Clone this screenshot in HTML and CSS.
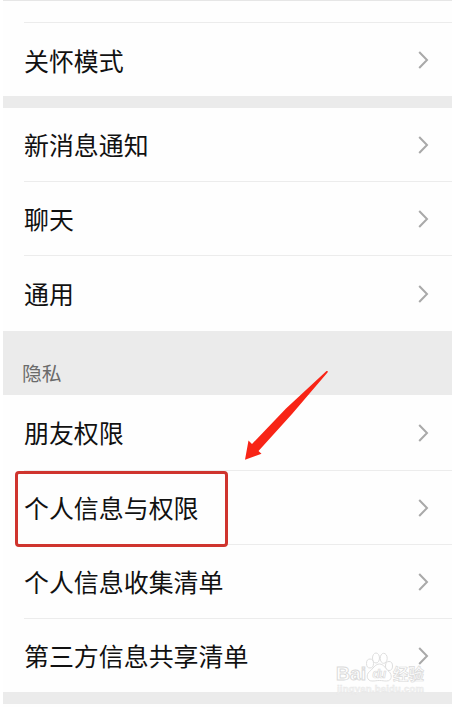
FILE: index.html
```html
<!doctype html>
<html lang="zh-CN">
<head>
    <meta charset="UTF-8">
    <title>设置</title>
    <link rel="stylesheet" href="styles.css">
</head>
<body>
    <svg class="defs" width="0" height="0">
        <symbol id="more" viewBox="0 0 12 20">
            <path d="M1.2 2 L9 10 L1.2 18"/>
        </symbol>
    </svg>
    <div class="page">
        <ul class="list first">
            <li class="empty"></li>
            <li><span>关怀模式</span><svg class="more"><use href="#more"/></svg></li>
        </ul>
        <div class="gap"></div>
        <ul class="list">
            <li><span>新消息通知</span><svg class="more"><use href="#more"/></svg></li>
            <li><span>聊天</span><svg class="more"><use href="#more"/></svg></li>
            <li class="tall"><span>通用</span><svg class="more"><use href="#more"/></svg></li>
        </ul>
        <h2 class="title">隐私</h2>
        <ul class="list privacy">
            <li class="tall"><span>朋友权限</span><svg class="more"><use href="#more"/></svg></li>
            <li><span>个人信息与权限</span><svg class="more"><use href="#more"/></svg></li>
            <li><span>个人信息收集清单</span><svg class="more"><use href="#more"/></svg></li>
            <li><span>第三方信息共享清单</span><svg class="more"><use href="#more"/></svg></li>
        </ul>
        <div class="gap"></div>
        <div class="mark"></div>
        <svg class="arrow" width="90" height="96" viewBox="0 0 90 96">
            <path d="M85.5 5 Q87.5 4.5 86.5 6.5 L51 48 L17.5 85 L20.5 87.7 L4 93.7 L7.5 74.5 L11 78 L45 42.5 Z"/>
        </svg>
        <svg class="watermark" width="100" height="50" viewBox="0 0 100 50">
            <text class="brand" x="0" y="33.5" textLength="30" lengthAdjust="spacingAndGlyphs">Bai</text>
            <g class="paw">
                <ellipse cx="34" cy="17.5" rx="3.5" ry="4.5"/>
                <ellipse cx="40" cy="12" rx="3.5" ry="5"/>
                <ellipse cx="47.7" cy="12.3" rx="3.5" ry="5"/>
                <ellipse cx="53" cy="20" rx="3.5" ry="4.5"/>
                <path d="M43.5 18 C39 18 37 23 33.5 25.5 C29.5 29 31 35 36 35 C40 35 40 34.5 43.5 34.5 C47 34.5 47 35 50.5 35 C56 35 56.5 29 53 25.5 C49.5 23 48 18 43.5 18 Z"/>
            </g>
            <text class="du" x="36.5" y="32.3" textLength="13.5">du</text>
            <text class="cn" x="57" y="33.7" textLength="31">经验</text>
            <text class="url" x="1" y="45.5" textLength="87">jingyan.baidu.com</text>
        </svg>
    </div>
</body>
</html>
```
FILE: styles.css
```css
*{
    margin: 0;
    padding: 0;
    box-sizing: border-box;
}
body{
    background: #fff;
    font-family: "Noto Sans CJK SC", sans-serif;
    color: #111;
}
li{
    list-style: none;
}
.defs{
    position: absolute;
}
.page{
    position: relative;
    width: 449px;
    height: 707px;
    margin-left: 3px;
    background: #fefefe;
    overflow: hidden;
}
.list li{
    display: flex;
    align-items: center;
    justify-content: space-between;
    height: 74px;
    margin-left: 21px;
    padding-right: 22px;
    border-bottom: 1px solid #ececec;
    font-size: 24.95px;
    line-height: 36px;
}
.list li:last-child{
    border-bottom: 0;
}
.list li.tall{
    height: 75px;
}
.list li.empty{
    height: 22px;
}
.list span{
    padding-bottom: 1px;
}
.first{
    height: 96px;
    border-top: 1px solid #e6e6e6;
}
.privacy li.tall{
    height: 76px;
}
.privacy li:last-child{
    height: 73px;
}
.more{
    width: 12px;
    height: 20px;
    fill: none;
    stroke: #a9a9a9;
    stroke-width: 2;
}
.gap{
    height: 12px;
    background: #ebebeb;
}
.title{
    height: 64px;
    padding: 27px 0 0 19px;
    background: #ebebeb;
    color: #6b6b6b;
    font-size: 19.8px;
    font-weight: 400;
    line-height: 30px;
}
.mark{
    position: absolute;
    left: 12px;
    top: 471px;
    width: 213px;
    height: 76px;
    border: 3px solid #cf342e;
    border-radius: 4px;
}
.arrow{
    position: absolute;
    left: 238px;
    top: 366px;
    fill: #f82416;
}
.watermark{
    position: absolute;
    left: 333px;
    top: 646px;
    fill: #fff;
    stroke: #dadada;
    stroke-width: .9;
}
.watermark .brand{
    font: bold 18px "Liberation Sans", sans-serif;
}
.watermark .du{
    font: bold italic 12px "Liberation Sans", sans-serif;
    stroke-width: .7;
}
.watermark .cn{
    font: bold 15.5px "Noto Sans CJK SC", sans-serif;
    stroke-width: .7;
}
.watermark .url{
    font: bold 9.5px "Liberation Sans", sans-serif;
    fill: #f3f3f3;
    stroke: #e6e6e6;
    stroke-width: .4;
}
```
